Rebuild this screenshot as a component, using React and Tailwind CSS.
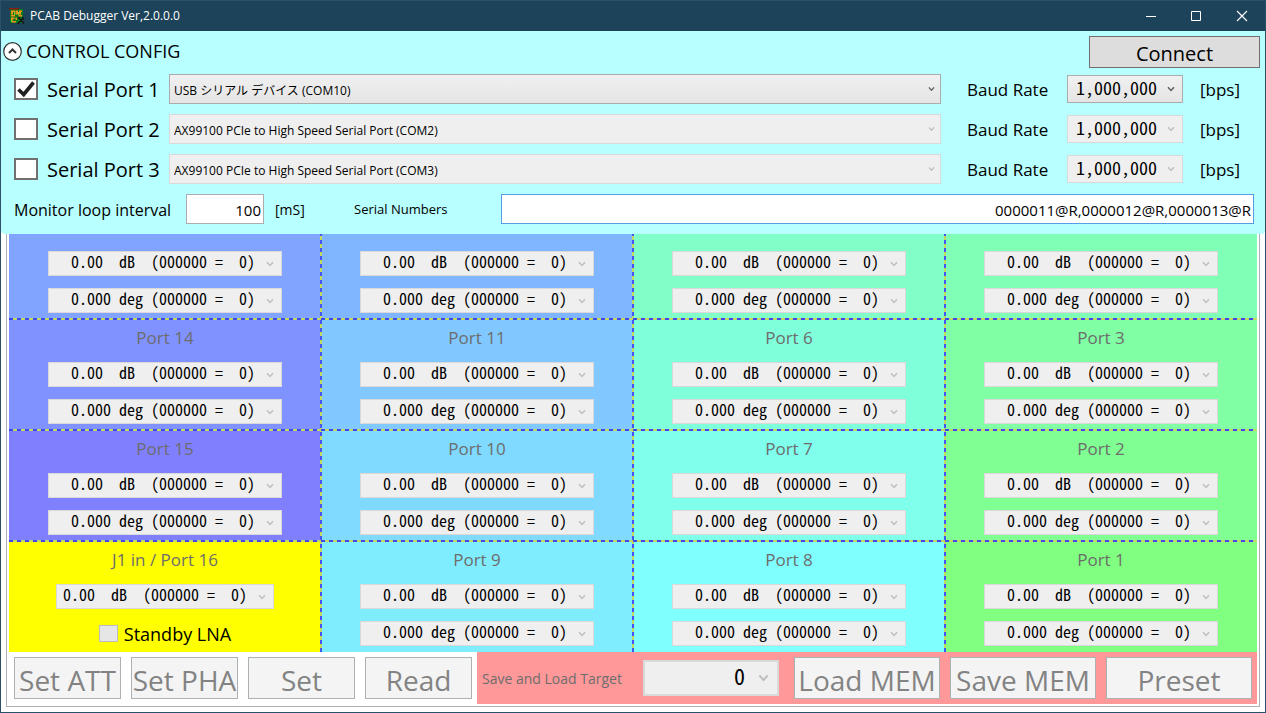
import React from "react";

const MONO = "font-['Noto_Sans_Mono_CJK_JP','Noto_Sans_CJK_JP','Liberation_Mono',monospace]";

const SERIAL_PORTS = [
  { id: 1, device: "USB シリアル デバイス (COM10)", enabled: true },
  { id: 2, device: "AX99100 PCIe to High Speed Serial Port (COM2)", enabled: false },
  { id: 3, device: "AX99100 PCIe to High Speed Serial Port (COM3)", enabled: false },
];

const ROWS = [
  [
    { port: 13, color: "bg-[#80a4ff]" },
    { port: 12, color: "bg-[#80b6ff]" },
    { port: 5, color: "bg-[#80ffc9]" },
    { port: 4, color: "bg-[#80ffb7]" },
  ],
  [
    { port: 14, color: "bg-[#8092ff]" },
    { port: 11, color: "bg-[#80c8ff]" },
    { port: 6, color: "bg-[#80ffdb]" },
    { port: 3, color: "bg-[#80ffa4]" },
  ],
  [
    { port: 15, color: "bg-[#8080ff]" },
    { port: 10, color: "bg-[#80daff]" },
    { port: 7, color: "bg-[#80ffed]" },
    { port: 2, color: "bg-[#80ff92]" },
  ],
  [
    { port: 16, color: "bg-[#ffff00]" },
    { port: 9, color: "bg-[#80edff]" },
    { port: 8, color: "bg-[#80ffff]" },
    { port: 1, color: "bg-[#80ff80]" },
  ],
];

const ATT = "0.00  dB  (000000 =  0)";
const PHASE = "0.000 deg (000000 =  0)";
const keepSpaces = (text) => text.replace(/ /g, "\u00a0");

function Combo({ value, label, disabled, box, text, arrow = "right-[7px] w-2", id }) {
  return (
    <div
      className={`relative overflow-hidden ${box} ${
        disabled
          ? "border-[#d9d9d9] bg-[#efefef]"
          : "border-[#acacac] bg-linear-to-b from-[#f0f0f0] to-[#e5e5e5]"
      }`}
    >
      <select
        id={id}
        aria-label={label}
        disabled={disabled}
        className={`block w-full appearance-none bg-transparent text-black opacity-100 ${text}`}
      >
        <option>{value}</option>
      </select>
      <svg
        viewBox="0 0 8 6"
        fill="none"
        stroke={disabled ? "#bfbfbf" : "#606060"}
        strokeWidth="1.5"
        className={`pointer-events-none absolute top-1/2 -translate-y-1/2 ${arrow}`}
      >
        <path d="M1 1.2 4 4.400 7 1.2" />
      </svg>
    </div>
  );
}

function PortCombo({ value, label, width = "w-3/4" }) {
  return (
    <Combo
      disabled
      value={keepSpaces(value)}
      label={label}
      box={`h-[25px] border ${width}`}
      text={`-mt-1.5 h-[29px] pl-1.5 text-base ${MONO}`}
    />
  );
}

function PortCell({ port, color, first }) {
  const standby = port === 16;
  return (
    <section className={`flex flex-col items-center pb-1.5 ${color} ${first ? "pt-[17px]" : ""}`}>
      {!first && (
        <h2 className="mb-[5px] text-[17px] leading-[38px] text-[#6d6d6d]">
          {standby ? "J1 in / Port 16" : `Port ${port}`}
        </h2>
      )}
      <div className="flex w-full flex-col items-center gap-3">
        {standby ? (
          <>
            <PortCombo value={ATT} label="Port 16 attenuation" width="w-[218px]" />
            <label className="flex h-[25px] items-center gap-1.5 text-[18px]">
              <input
                type="checkbox"
                disabled
                className="h-[17px] w-[19px] appearance-none border border-[#bcbcbc] bg-[#e6e6e6]"
              />
              <span className="pt-0.5">Standby LNA</span>
            </label>
          </>
        ) : (
          <>
            <PortCombo value={"  " + ATT} label={`Port ${port} attenuation`} />
            <PortCombo value={"  " + PHASE} label={`Port ${port} phase`} />
          </>
        )}
      </div>
    </section>
  );
}

function GridLines() {
  const vertical =
    "pointer-events-none absolute inset-y-0 w-0.5 -translate-x-1/2 bg-[repeating-linear-gradient(to_bottom,#4456f4_0_2px,#c4d860_2px_6px,#4456f4_6px_8px)]";
  const horizontal =
    "pointer-events-none absolute inset-x-0 h-0.5 bg-[repeating-linear-gradient(to_right,#3c48f0_0_4px,#c4d860_4px_8px)]";
  return (
    <>
      <div className={`${vertical} left-1/4`} />
      <div className={`${vertical} left-1/2`} />
      <div className={`${vertical} left-3/4`} />
      <div className={`${horizontal} bottom-[332px]`} />
      <div className={`${horizontal} bottom-[221px]`} />
      <div className={`${horizontal} bottom-[110px]`} />
    </>
  );
}

function ActionButton({ children }) {
  return (
    <button
      disabled
      className="m-[5px] h-[42px] overflow-hidden whitespace-nowrap border border-[#adb2b5] bg-[#f4f4f4] pt-0.5 text-center text-[28px] leading-10 text-[#838383]"
    >
      {children}
    </button>
  );
}

function AppIcon() {
  return (
    <svg viewBox="0 0 16 17" className="h-[17px] w-4">
      <rect x="1" y="1" width="13" height="14" fill="#0b7a1c" />
      <path d="M0 0h10v1.500H0z" fill="#8a1a10" />
      <path
        d="M2 2.500h4V4H4v2.500H2zM6.500 2.500h2.500v4H6.500zM10 2.500h3V4h-1v2.500h-2zM2 7h4v1.500H2zM9.500 7H13v1.500H9.500zM2 9.500h3.500V11H4v1.500H2zM6.500 9.500H8V12H6.500zM3 13h4v1.500H3z"
        fill="#f0901c"
      />
      <path d="M5 4h1v3H5zM9 4h1v3H9zM2 12h1v2H2z" fill="#7fd02a" />
      <path d="M8.500 16 14 10.500M10 10l5 5.500M9 9.500l2 1M13 9.500l2 1.500" stroke="#151515" strokeWidth="1.6" fill="none" />
    </svg>
  );
}

function TitleBar() {
  return (
    <header className="flex h-[30px] items-center bg-[#1c435a] pl-2 text-white">
      <AppIcon />
      <h1 className="ml-[5px] flex-1 text-[12px]">PCAB Debugger Ver,2.0.0.0</h1>
      <button aria-label="Minimize" className="flex h-full w-[45px] items-center justify-center">
        <svg viewBox="0 0 12 12" className="w-3" stroke="currentColor" fill="none">
          <path d="M1 6.500h10" />
        </svg>
      </button>
      <button aria-label="Maximize" className="flex h-full w-[46px] items-center justify-center">
        <svg viewBox="0 0 12 12" className="w-3" stroke="currentColor" fill="none">
          <path d="M1.500 1.500h9v9h-9z" />
        </svg>
      </button>
      <button aria-label="Close" className="flex h-full w-[46px] items-center justify-center">
        <svg viewBox="0 0 12 12" className="w-3" stroke="currentColor" strokeWidth="1.2" fill="none">
          <path d="m1 1 10 10M11 1 1 11" />
        </svg>
      </button>
    </header>
  );
}

function SerialRow({ id, device, enabled }) {
  return (
    <div className="grid grid-cols-[155px_minmax(0,1fr)_126px_116px_82px] items-center">
      <label className="flex items-center gap-[9px] text-[20px] leading-7">
        <span className="relative flex h-[22px] w-6">
          <input
            type="checkbox"
            defaultChecked={enabled}
            className="peer h-full w-full appearance-none border-2 border-[#707070] bg-white"
          />
          <svg
            viewBox="0 0 24 22"
            fill="none"
            stroke="#212121"
            strokeWidth="3.6"
            className="pointer-events-none absolute inset-0 hidden peer-checked:block"
          >
            <path d="m4.500 11.500 5.200 5L19.500 4.500" />
          </svg>
        </span>
        <span className="pt-0.5">Serial Port {id}</span>
      </label>
      <Combo
        value={device}
        label={`Serial port ${id} device`}
        disabled={!enabled}
        box="h-[30px] border"
        text="h-full pt-[3px] pl-1 text-[12px]"
        arrow="right-[5px] w-[7px]"
      />
      <label htmlFor={`baud-${id}`} className="pt-0.5 pl-[26px] text-[17px] leading-7">
        Baud Rate
      </label>
      <Combo
        id={`baud-${id}`}
        value="1,000,000"
        disabled={!enabled}
        box="h-7 border"
        text={`-mt-1 h-[30px] pl-2 text-[18px] ${MONO}`}
      />
      <span className="pt-0.5 pl-[17px] text-[17px] leading-7">[bps]</span>
    </div>
  );
}

function ControlConfig() {
  return (
    <section className="rounded-b-sm bg-[#b8ffff] pt-[5px] pb-2.5">
      <div className="mb-1.5 flex items-start justify-between pr-[5px] pl-0.5">
        <button className="flex items-center gap-1 text-[18px] leading-[30px]">
          <svg viewBox="0 0 19 19" fill="none" className="h-[19px] w-[19px]">
            <circle cx="9.500" cy="9.500" r="8.800" fill="#fff" stroke="#333" strokeWidth="1.2" />
            <path d="m6 11 3.500-3.500L13 11" stroke="#333" strokeWidth="2" />
          </svg>
          CONTROL CONFIG
        </button>
        <button className="h-8 w-[171px] border border-[#707070] bg-[#dddddd] pt-[3px] text-[20px] leading-7">
          Connect
        </button>
      </div>
      <div className="flex flex-col gap-2.5 pl-[13px]">
        {SERIAL_PORTS.map((p) => (
          <SerialRow key={p.id} {...p} />
        ))}
        <div className="flex items-center pr-[11px]">
          <label htmlFor="interval" className="w-[172px] pt-0.5 text-base">
            Monitor loop interval
          </label>
          <input
            id="interval"
            defaultValue="100"
            className="h-[30px] w-[78px] border border-[#abadb3] bg-white pt-0.5 pr-0.5 text-right text-[15px]"
          />
          <span className="w-[90px] pl-[11px] text-[14px]">[mS]</span>
          <label htmlFor="numbers" className="w-[147px] pt-0.5 text-[13px]">
            Serial Numbers
          </label>
          <input
            id="numbers"
            defaultValue="0000011@R,0000012@R,0000013@R"
            className="h-[30px] min-w-0 flex-1 border border-[#569de5] bg-white pt-0.5 pr-0.5 text-right text-[15px]"
          />
        </div>
      </div>
    </section>
  );
}

export default function App() {
  return (
    <div className="flex min-h-screen flex-col border border-[#2c5068] bg-white font-['Open_Sans','Noto_Sans_CJK_JP',sans-serif] text-black">
      <TitleBar />
      <ControlConfig />
      <main className="mx-[5px] mb-[5px] flex-1 border-x border-b border-[#adb0b4] px-0.5 pb-0.5">
        <div className="relative">
          {ROWS.map((row, i) => (
            <div key={i} className="grid grid-cols-4">
              {row.map((cell) => (
                <PortCell key={cell.port} {...cell} first={i === 0} />
              ))}
            </div>
          ))}
          <GridLines />
        </div>
        <div className="grid grid-cols-[minmax(0,3fr)_minmax(0,5fr)]">
          <div className="grid grid-cols-4">
            <ActionButton>Set ATT</ActionButton>
            <ActionButton>Set PHA</ActionButton>
            <ActionButton>Set</ActionButton>
            <ActionButton>Read</ActionButton>
          </div>
          <div className="grid grid-cols-5 items-center bg-[#ff9999]">
            <label htmlFor="target" className="pl-[5px] text-[14px] whitespace-nowrap text-[#6d6d6d]">
              Save and Load Target
            </label>
            <Combo
              id="target"
              value="0"
              disabled
              box="mx-2.5 h-9 border-2"
              text={`-mt-1.5 h-[38px] pr-8 text-[22px] [text-align-last:right] ${MONO}`}
              arrow="right-2 w-[11px]"
            />
            <ActionButton>Load MEM</ActionButton>
            <ActionButton>Save MEM</ActionButton>
            <ActionButton>Preset</ActionButton>
          </div>
        </div>
      </main>
    </div>
  );
}
